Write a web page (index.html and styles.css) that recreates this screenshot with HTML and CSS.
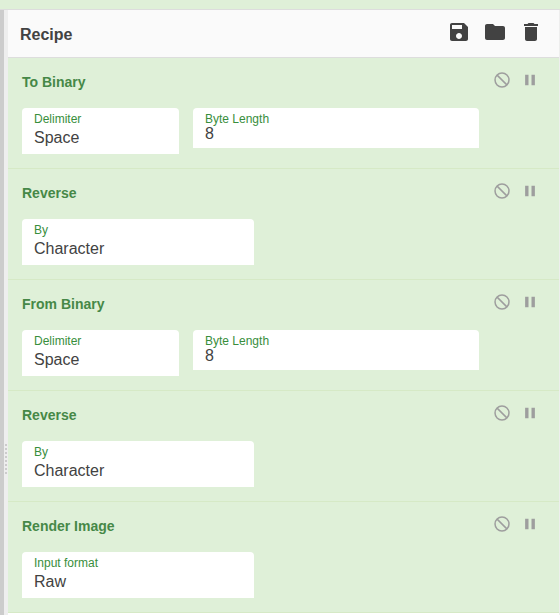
FILE: index.html
```html
<!DOCTYPE html>
<html lang="en">
<head>
<meta charset="utf-8">
<title>Recipe</title>
<link rel="stylesheet" href="styles.css">
</head>
<body>
<svg class="sprite" aria-hidden="true">
  <symbol id="save" viewBox="0 0 24 24"><path d="M17 3H5c-1.110 0-2 .9-2 2v14c0 1.100.89 2 2 2h14c1.100 0 2-.9 2-2V7l-4-4zm-5 16c-1.660 0-3-1.340-3-3s1.340-3 3-3 3 1.340 3 3-1.340 3-3 3zm3-10H5V5h10v4z"/></symbol>
  <symbol id="folder" viewBox="0 0 24 24"><path d="M10 4H4c-1.100 0-1.990.9-1.990 2L2 18c0 1.100.9 2 2 2h16c1.100 0 2-.9 2-2V8c0-1.100-.9-2-2-2h-8l-2-2z"/></symbol>
  <symbol id="trash" viewBox="0 0 24 24"><path d="M6 19c0 1.100.9 2 2 2h8c1.100 0 2-.9 2-2V7H6v12zM19 4h-3.500l-1-1h-5l-1 1H5v2h14V4z"/></symbol>
  <symbol id="block" viewBox="0 0 24 24"><g fill="none" stroke="currentColor" stroke-width="2"><circle cx="12" cy="12" r="9.300"/><path d="M5.500 5.500l13 13"/></g></symbol>
  <symbol id="pause" viewBox="0 0 24 24"><path d="M5.500 19h4.500V5H5.500v14zM14 5v14h4.500V5H14z"/></symbol>
</svg>
<div class="banner"></div>
<div class="workspace">
  <div class="gutter"></div>
  <main class="recipe">
    <header class="recipe-header">
      <h1>Recipe</h1>
      <div class="recipe-actions">
        <button type="button" aria-label="Save recipe"><svg><use href="#save"/></svg></button>
        <button type="button" aria-label="Load recipe"><svg><use href="#folder"/></svg></button>
        <button type="button" aria-label="Clear recipe"><svg><use href="#trash"/></svg></button>
      </div>
    </header>
    <section class="operation">
      <div class="operation-head">
        <h2>To Binary</h2>
        <div class="operation-actions">
          <button type="button" aria-label="Disable operation"><svg><use href="#block"/></svg></button>
          <button type="button" aria-label="Set breakpoint"><svg><use href="#pause"/></svg></button>
        </div>
      </div>
      <div class="arguments">
        <div class="field short">
          <label for="delimiter-1">Delimiter</label>
          <select id="delimiter-1"><option>Space</option></select>
        </div>
        <div class="field long">
          <label for="length-1">Byte Length</label>
          <input id="length-1" type="text" inputmode="numeric" value="8">
        </div>
      </div>
    </section>
    <section class="operation">
      <div class="operation-head">
        <h2>Reverse</h2>
        <div class="operation-actions">
          <button type="button" aria-label="Disable operation"><svg><use href="#block"/></svg></button>
          <button type="button" aria-label="Set breakpoint"><svg><use href="#pause"/></svg></button>
        </div>
      </div>
      <div class="arguments">
        <div class="field">
          <label for="by-1">By</label>
          <select id="by-1"><option>Character</option></select>
        </div>
      </div>
    </section>
    <section class="operation">
      <div class="operation-head">
        <h2>From Binary</h2>
        <div class="operation-actions">
          <button type="button" aria-label="Disable operation"><svg><use href="#block"/></svg></button>
          <button type="button" aria-label="Set breakpoint"><svg><use href="#pause"/></svg></button>
        </div>
      </div>
      <div class="arguments">
        <div class="field short">
          <label for="delimiter-2">Delimiter</label>
          <select id="delimiter-2"><option>Space</option></select>
        </div>
        <div class="field long">
          <label for="length-2">Byte Length</label>
          <input id="length-2" type="text" inputmode="numeric" value="8">
        </div>
      </div>
    </section>
    <section class="operation">
      <div class="operation-head">
        <h2>Reverse</h2>
        <div class="operation-actions">
          <button type="button" aria-label="Disable operation"><svg><use href="#block"/></svg></button>
          <button type="button" aria-label="Set breakpoint"><svg><use href="#pause"/></svg></button>
        </div>
      </div>
      <div class="arguments">
        <div class="field">
          <label for="by-2">By</label>
          <select id="by-2"><option>Character</option></select>
        </div>
      </div>
    </section>
    <section class="operation">
      <div class="operation-head">
        <h2>Render Image</h2>
        <div class="operation-actions">
          <button type="button" aria-label="Disable operation"><svg><use href="#block"/></svg></button>
          <button type="button" aria-label="Set breakpoint"><svg><use href="#pause"/></svg></button>
        </div>
      </div>
      <div class="arguments">
        <div class="field">
          <label for="format">Input format</label>
          <select id="format"><option>Raw</option></select>
        </div>
      </div>
    </section>
  </main>
</div>
</body>
</html>
```
FILE: styles.css
```css
* {
  box-sizing: border-box;
}

body {
  margin: 0;
  min-height: 100vh;
  display: flex;
  flex-direction: column;
  background: #fff;
  color: #424242;
  font-family: "Liberation Sans", Arial, sans-serif;
}

.sprite {
  display: none;
}

.banner {
  height: 10px;
  background: #dff0d8;
  border-bottom: 1px solid #ddd;
}

.workspace {
  flex: 1;
  display: flex;
}

/* Drag handle between the panes: a dark track, a light rail and eight dots */
.gutter {
  width: 8px;
  border-left: 4px solid #ccc;
  background: #eee;
}

.gutter::before {
  content: "";
  display: block;
  width: 2px;
  height: 32px;
  margin: 434px 0 0 1px;
  background: repeating-linear-gradient(#ccc 0 2px, transparent 2px 4px);
}

.recipe {
  flex: 1;
  min-width: 0;
  border-right: 1px solid #eee;
}

.recipe-header {
  display: flex;
  justify-content: space-between;
  align-items: flex-start;
  height: 48px;
  padding: 10px 16px 0 12px;
  background: #fafafa;
  border-bottom: 1px solid #ddd;
}

h1,
h2 {
  margin: 0;
  font-weight: bold;
}

h1 {
  font-size: 16px;
  line-height: 30px;
}

.recipe-actions {
  display: flex;
  gap: 12px;
}

button {
  display: block;
  padding: 0;
  border: 0;
  background: none;
  color: inherit;
  cursor: pointer;
}

button svg {
  display: block;
  width: 24px;
  height: 24px;
  fill: currentColor;
}

.operation {
  padding: 14px;
  background: #dff0d8;
  border-bottom: 1px solid #d6e9c6;
}

.operation-head {
  display: flex;
  justify-content: space-between;
  margin-bottom: 16px;
}

h2 {
  color: #468847;
  font-size: 14px;
  line-height: 20px;
}

.operation-actions {
  display: flex;
  gap: 10px;
  height: 16px;
  align-items: center;
  padding-right: 6px;
  color: #9e9e9e;
}

.operation-actions svg {
  width: 18px;
  height: 18px;
}

.arguments {
  display: flex;
  flex-wrap: wrap;
  align-items: flex-start;
  gap: 14px;
}

.field {
  width: 232px;
  padding: 4px 12px 6px;
  background: #fff;
  border-radius: 4px 4px 0 0;
}

.field.short {
  width: 157px;
}

.field.long {
  width: 286px;
}

.field label {
  display: block;
  color: #388e3c;
  font-size: 12px;
  line-height: 14px;
}

.field select,
.field input {
  display: block;
  appearance: none;
  width: 100%;
  margin: 0;
  padding: 0;
  border: 0;
  background: none;
  color: #424242;
  font: 16px/20px "Liberation Sans", Arial, sans-serif;
}

.field select {
  height: 22px;
  padding-top: 2px;
}

.field input {
  height: 16px;
  line-height: 16px;
}
```
